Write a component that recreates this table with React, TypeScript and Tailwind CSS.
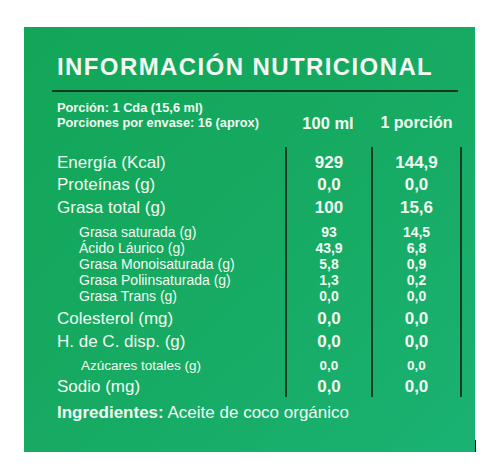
const rows = [
  { label: "Energía (Kcal)", a: "929", b: "144,9", kind: "main", row: "h-[26px] items-end" },
  { label: "Proteínas (g)", a: "0,0", b: "0,0", kind: "main", row: "h-[23px] items-center" },
  { label: "Grasa total (g)", a: "100", b: "15,6", kind: "main", row: "h-[24px] items-center" },
  { label: "Grasa saturada (g)", a: "93", b: "14,5", kind: "sub", row: "h-[20px] items-end" },
  { label: "Ácido Láurico (g)", a: "43,9", b: "6,8", kind: "sub", row: "h-[16px] items-center" },
  { label: "Grasa Monoisaturada (g)", a: "5,8", b: "0,9", kind: "sub", row: "h-[16px] items-center" },
  { label: "Grasa Poliinsaturada (g)", a: "1,3", b: "0,2", kind: "sub", row: "h-[16px] items-center" },
  { label: "Grasa Trans (g)", a: "0,0", b: "0,0", kind: "sub", row: "h-[19px] items-start" },
  { label: "Colesterol (mg)", a: "0,0", b: "0,0", kind: "main", row: "h-[23px] items-center" },
  { label: "H. de C. disp. (g)", a: "0,0", b: "0,0", kind: "main", row: "h-[24px] items-center" },
  { label: "Azúcares totales (g)", a: "0,0", b: "0,0", kind: "small", row: "h-[24px] items-center" },
  { label: "Sodio (mg)", a: "0,0", b: "0,0", kind: "main", row: "h-[19px] items-end" },
];

const labelCls: Record<string, string> = {
  main: "text-[17px] leading-[20px]",
  sub: "pl-[22px] text-[14px] leading-[16px]",
  small: "pl-[24px] text-[13.5px] leading-[16px]",
};

const valueCls: Record<string, string> = {
  main: "text-[17px] leading-[20px] font-bold",
  sub: "text-[14px] leading-[16px] font-bold",
  small: "text-[13.5px] leading-[16px] font-bold",
};

export default function App() {
  return (
    <div
      className="w-[500px] h-[476px] bg-white pt-[27px] pl-[24px] flex items-start"
      style={{ fontFamily: '"Liberation Sans", Arial, sans-serif' }}
    >
      <div className="w-[451px] h-[425px] bg-linear-to-br from-[#12a658] via-[#16aa62] to-[#1ab273] text-[#f2faf2] pt-[28px] pl-[33px]">
        {/* Title */}
        <h1 className="text-[24px] leading-[24px] font-bold tracking-[1.4px]">
          INFORMACIÓN NUTRICIONAL
        </h1>
        <div className="ml-[-5px] mt-[11px] w-[406px] h-[2px] bg-[#17361f]" />

        {/* Header */}
        <div className="mt-[8px] grid grid-cols-[228px_86px_91px] items-end">
          <div className="text-[12.8px] leading-[15px] font-bold">
            <div>Porción: 1 Cda (15,6 ml)</div>
            <div>Porciones por envase: 16 (aprox)</div>
          </div>
          <div className="text-center text-[16.5px] leading-[14px] font-bold">100 ml</div>
          <div className="text-center text-[16px] leading-[14px] font-bold">1 porción</div>
        </div>

        {/* Table */}
        <div className="mt-[17px] grid grid-cols-[228px_86px_91px]">
          {rows.map((r) => (
            <div key={r.label} className="contents">
              <div className={`flex ${r.row}`}>
                <span className={labelCls[r.kind]}>{r.label}</span>
              </div>
              <div className={`flex justify-center border-l-2 border-[#1b3a23] ${r.row}`}>
                <span className={valueCls[r.kind]}>{r.a}</span>
              </div>
              <div className={`flex justify-center border-x-2 border-[#1b3a23] ${r.row}`}>
                <span className={valueCls[r.kind]}>{r.b}</span>
              </div>
            </div>
          ))}
        </div>

        {/* Ingredients */}
        <p className="mt-[6px] text-[17px] leading-[20px]">
          <span className="font-bold">Ingredientes:</span> Aceite de coco orgánico
        </p>
      </div>
      <div className="self-start mt-[413px] w-px h-[12px] bg-black" />
    </div>
  );
}
